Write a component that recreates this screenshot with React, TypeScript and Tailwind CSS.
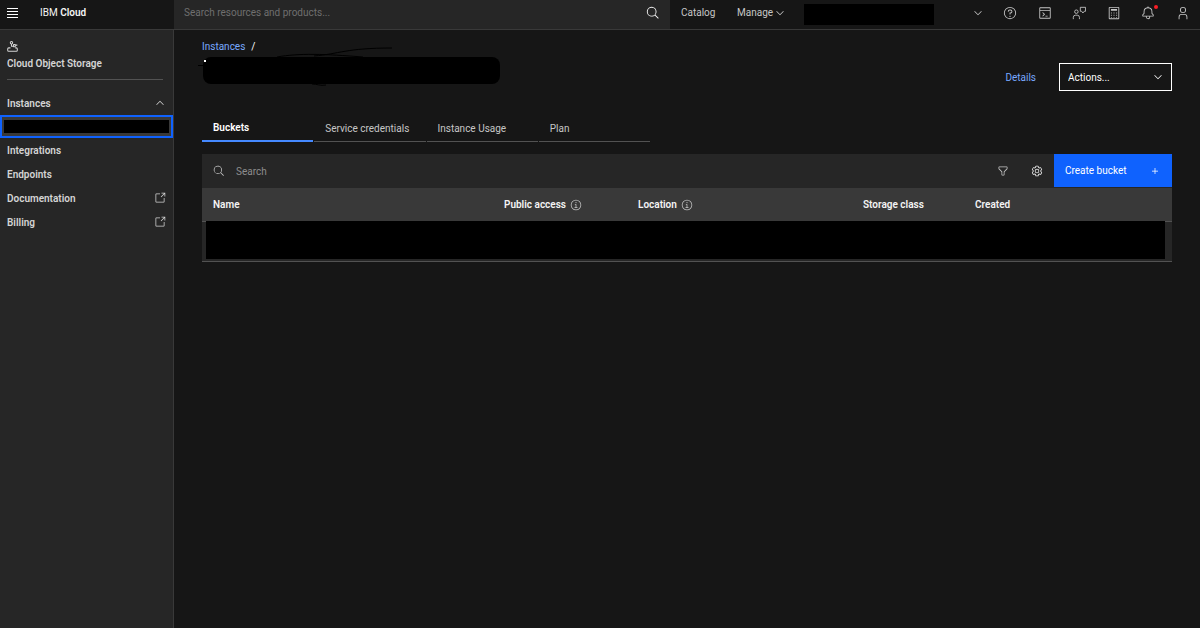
import { useState } from "react";
import type { ReactNode } from "react";
import clsx from "clsx";

interface IconProps {
  className?: string;
  children?: ReactNode;
}

const TABS = ["Buckets", "Service credentials", "Instance Usage", "Plan"];

const NAV_LINKS = [
  { label: "Integrations", external: false },
  { label: "Endpoints", external: false },
  { label: "Documentation", external: true },
  { label: "Billing", external: true },
];

const COLUMNS = [
  { label: "Name", width: "", info: false },
  { label: "Public access", width: "w-[134px]", info: true },
  { label: "Location", width: "w-[225px]", info: true },
  { label: "Storage class", width: "w-[112px]", info: false },
  { label: "Created", width: "w-[208px]", info: false },
];

function Icon({ className, children }: IconProps) {
  return (
    <svg viewBox="0 0 32 32" fill="currentColor" aria-hidden="true" className={clsx("shrink-0", className)}>
      {children}
    </svg>
  );
}

function SearchIcon({ className }: IconProps) {
  return (
    <Icon className={className}>
      <path d="M29,27.5859l-7.5521-7.5521a11.0177,11.0177,0,1,0-1.4141,1.4141L27.5859,29ZM4,13a9,9,0,1,1,9,9A9.01,9.01,0,0,1,4,13Z" />
    </Icon>
  );
}

function ChevronIcon({ className }: IconProps) {
  return (
    <Icon className={className}>
      <path d="M16 22 6 12 7.4 10.6 16 19.2 24.6 10.6 26 12z" />
    </Icon>
  );
}

function LaunchIcon({ className }: IconProps) {
  return (
    <Icon className={className}>
      <path d="M26,28H6a2,2,0,0,1-2-2V6A2,2,0,0,1,6,4H16V6H6V26H26V16h2V26A2,2,0,0,1,26,28Z" />
      <path d="M20 2v2h6.586L18 12.586 19.414 14 28 5.414V12h2V2z" />
    </Icon>
  );
}

function InfoIcon({ className }: IconProps) {
  return (
    <Icon className={className}>
      <path d="M17 22V14H13v2h2v6H12v2h8V22ZM16 8a1.5 1.5 0 1 0 1.5 1.5A1.5 1.5 0 0 0 16 8Z" />
      <path d="M16 30A14 14 0 1 1 30 16 14 14 0 0 1 16 30ZM16 4A12 12 0 1 0 28 16 12 12 0 0 0 16 4Z" />
    </Icon>
  );
}

function FilterIcon({ className }: IconProps) {
  return (
    <Icon className={className}>
      <path d="M18 28H14a2 2 0 0 1-2-2V18.41L4.59 11A2 2 0 0 1 4 9.59V6A2 2 0 0 1 6 4H26a2 2 0 0 1 2 2V9.59A2 2 0 0 1 27.41 11L20 18.41V26A2 2 0 0 1 18 28ZM6 6V9.59l8 8V26h4V17.59l8-8V6Z" />
    </Icon>
  );
}

function SettingsIcon({ className }: IconProps) {
  return (
    <Icon className={className}>
      <path d="M27,16.76c0-.25,0-.5,0-.76s0-.51,0-.77l1.92-1.68A2,2,0,0,0,29.3,11L26.94,7a2,2,0,0,0-1.73-1,2,2,0,0,0-.64.1l-2.43.82a11.35,11.35,0,0,0-1.31-.75l-.51-2.52a2,2,0,0,0-2-1.61H13.64a2,2,0,0,0-2,1.61l-.51,2.52a11.48,11.48,0,0,0-1.32.75L7.43,6.06A2,2,0,0,0,6.79,6,2,2,0,0,0,5.06,7L2.7,11a2,2,0,0,0,.41,2.51L5,15.24c0,.25,0,.5,0,.76s0,.51,0,.77L3.11,18.45A2,2,0,0,0,2.7,21L5.06,25a2,2,0,0,0,1.73,1,2,2,0,0,0,.64-.1l2.43-.82a11.35,11.35,0,0,0,1.31.75l.51,2.52a2,2,0,0,0,2,1.61h4.72a2,2,0,0,0,2-1.61l.51-2.52a11.48,11.48,0,0,0,1.32-.75l2.42.82a2,2,0,0,0,.64.1,2,2,0,0,0,1.73-1L29.3,21a2,2,0,0,0-.41-2.51ZM25.21,24l-3.43-1.16a8.86,8.86,0,0,1-2.71,1.57L18.36,28H13.64l-.71-3.55a9.36,9.36,0,0,1-2.7-1.57L6.79,24,4.43,20l2.72-2.4a8.9,8.9,0,0,1,0-3.13L4.43,12,6.79,8l3.43,1.16a8.86,8.86,0,0,1,2.71-1.57L13.64,4h4.72l.71,3.55a9.36,9.36,0,0,1,2.7,1.57L25.21,8,27.57,12l-2.72,2.4a8.9,8.9,0,0,1,0,3.13L27.57,20Z" />
      <path d="M16,22a6,6,0,1,1,6-6A5.94,5.94,0,0,1,16,22Zm0-10a3.91,3.91,0,0,0-4,4,3.91,3.91,0,0,0,4,4,3.91,3.91,0,0,0,4-4A3.91,3.91,0,0,0,16,12Z" />
    </Icon>
  );
}

function HelpIcon({ className }: IconProps) {
  return (
    <Icon className={className}>
      <path d="M16 2A14 14 0 1 0 30 16 14 14 0 0 0 16 2Zm0 26A12 12 0 1 1 28 16 12 12 0 0 1 16 28Z" />
      <circle cx="16" cy="23.5" r="1.5" />
      <path d="M17 8h-1.5A4.49 4.49 0 0 0 11 12.500V13h2v-.5A2.500 2.500 0 0 1 15.500 10H17a2.500 2.500 0 0 1 0 5H15v4.500h2V17a4.500 4.500 0 0 0 0-9Z" />
    </Icon>
  );
}

function ShellIcon({ className }: IconProps) {
  return (
    <Icon className={className}>
      <path d="M27 3H5A2 2 0 0 0 3 5V27a2 2 0 0 0 2 2H27a2 2 0 0 0 2-2V5A2 2 0 0 0 27 3Zm0 2V9H5V5ZM5 27V11H27V27Z" />
      <path d="M11.200 14 9.800 15.400 13.400 19 9.800 22.600 11.200 24 16.200 19zM17 22h5v2h-5z" />
    </Icon>
  );
}

function FeedbackIcon({ className }: IconProps) {
  return (
    <Icon className={className}>
      <g fill="none" stroke="currentColor" strokeWidth="2">
        <circle cx="10" cy="13" r="4" />
        <path d="M3 30v-4a5 5 0 0 1 5-5h4a5 5 0 0 1 5 5v4" />
        <path d="M21 12h-2V3h12v9h-3l-3 4-3-4z" />
      </g>
    </Icon>
  );
}

function CalculatorIcon({ className }: IconProps) {
  return (
    <Icon className={className}>
      <path d="M26 2H6A2 2 0 0 0 4 4V28a2 2 0 0 0 2 2H26a2 2 0 0 0 2-2V4A2 2 0 0 0 26 2ZM6 28V4H26V28Z" />
      <path d="M9 7h14v4H9zM9 15h2v2H9zM15 15h2v2h-2zM21 15h2v2h-2zM9 20h2v2H9zM15 20h2v2h-2zM21 20h2v2h-2zM9 25h2v2H9zM15 25h2v2h-2zM21 25h2v2h-2z" />
    </Icon>
  );
}

function BellIcon({ className }: IconProps) {
  return (
    <Icon className={className}>
      <path d="M28.7071,19.293,26,16.5859V13a10.0136,10.0136,0,0,0-9-9.9492V1H15V3.0508A10.0136,10.0136,0,0,0,6,13v3.5859L3.2929,19.293A1,1,0,0,0,3,20v3a1,1,0,0,0,1,1h7v.7768a5.152,5.152,0,0,0,4.5,5.1987A5.0057,5.0057,0,0,0,21,25V24h7a1,1,0,0,0,1-1V20A1,1,0,0,0,28.7071,19.293ZM19,25a3,3,0,0,1-6,0V24h6Zm8-3H5V20.4141L7.707,17.707A1,1,0,0,0,8,17V13a8,8,0,0,1,16,0v4a1,1,0,0,0,.293.707L27,20.4141Z" />
    </Icon>
  );
}

function UserIcon({ className }: IconProps) {
  return (
    <Icon className={className}>
      <path d="M16 4a5 5 0 1 1-5 5 5 5 0 0 1 5-5m0-2a7 7 0 1 0 7 7A7 7 0 0 0 16 2ZM26 30H24V25a5 5 0 0 0-5-5H13a5 5 0 0 0-5 5v5H6V25a7 7 0 0 1 7-7h6a7 7 0 0 1 7 7Z" />
    </Icon>
  );
}

function StorageIcon({ className }: IconProps) {
  return (
    <Icon className={className}>
      <g fill="none" stroke="currentColor" strokeWidth="3">
        <circle cx="13" cy="5" r="3.500" />
        <path d="M13 9v6h6" />
        <rect x="19" y="10" width="5" height="7" rx="1" />
        <path d="M24 12h6M10 20H5a3 3 0 0 0-3 3v4a3 3 0 0 0 3 3h22a3 3 0 0 0 3-3v-4a3 3 0 0 0-3-3h-3" />
      </g>
    </Icon>
  );
}

const TOOLS = [
  { label: "Help", icon: HelpIcon },
  { label: "Cloud Shell", icon: ShellIcon },
  { label: "Feedback", icon: FeedbackIcon },
  { label: "Cost estimator", icon: CalculatorIcon },
  { label: "Notifications", icon: BellIcon },
  { label: "Account", icon: UserIcon },
];

function Header() {
  return (
    <header className="flex h-[30px] border-b border-[#393939] text-[#c6c6c6]">
      <div className="flex w-[174px] shrink-0 items-center pb-1 pl-[7px]">
        <button aria-label="Menu" className="flex w-[11px] flex-col gap-[2px] text-white">
          <span className="h-px w-full bg-current" />
          <span className="h-px w-full bg-current" />
          <span className="h-px w-full bg-current" />
          <span className="h-px w-full bg-current" />
        </button>
        <a href="#" className="ml-[22px] text-[#f4f4f4]">
          IBM <span className="font-semibold">Cloud</span>
        </a>
      </div>
      <div className="flex flex-1 items-center bg-[#262626] pr-[10px] pb-1 pl-[10px]">
        <input
          type="search"
          aria-label="Search resources and products"
          placeholder="Search resources and products..."
          className="min-w-0 flex-1 bg-transparent outline-none placeholder:text-[#6f6f6f]"
        />
        <button aria-label="Search" className="text-[#f4f4f4]">
          <SearchIcon className="size-[14px]" />
        </button>
      </div>
      <nav className="flex shrink-0 items-center pb-1 pl-[11px]">
        <a href="#" className="w-14">Catalog</a>
        <button className="flex w-[67px] items-center gap-px">
          Manage <ChevronIcon className="size-3" />
        </button>
        <button aria-label="Switch account" className="flex items-start pt-[3px]">
          <span className="h-[21px] w-[130px] bg-black" />
          <ChevronIcon className="mt-[3px] mr-[9px] ml-[38px] size-3" />
        </button>
        <div className="grid w-[207px] grid-cols-6">
          {TOOLS.map(({ label, icon: ToolIcon }) => (
            <button key={label} aria-label={label} className="relative flex justify-center">
              <ToolIcon className="size-[14px]" />
              {label === "Notifications" && (
                <span className="absolute -top-px right-2 size-1 rounded-full bg-[#fa1e26]" />
              )}
            </button>
          ))}
        </div>
      </nav>
    </header>
  );
}

function Sidebar() {
  return (
    <aside className="w-[174px] shrink-0 border-r border-[#393939] bg-[#262626] font-semibold text-[#d4d4d4]">
      <div className="mr-[10px] ml-[7px] border-b border-[#525252] pt-[11px] pb-2">
        <StorageIcon className="size-[11px]" />
        <div className="mt-1">Cloud Object Storage</div>
      </div>
      <nav className="pt-[11px]">
        <button className="flex h-6 w-full items-center justify-between pr-[7px] pl-[7px]">
          Instances <ChevronIcon className="size-3 rotate-180" />
        </button>
        <a href="#" aria-label="Current instance" className="block h-[23px] border-2 border-[#0f62fe] bg-[#393939] px-[2px] py-[3px]">
          <span className="block h-[13px] bg-black" />
        </a>
        {NAV_LINKS.map(({ label, external }) => (
          <a key={label} href="#" className="flex h-6 items-center justify-between pr-[7px] pl-[7px]">
            {label}
            {external && <LaunchIcon className="size-3" />}
          </a>
        ))}
      </nav>
    </aside>
  );
}

function InstanceName() {
  return (
    <h1 aria-label="Instance name" className="relative mt-[3px] ml-px h-[27px] w-[297px] rounded-lg bg-black">
      {/* pen strokes around the blacked-out name */}
      <svg viewBox="0 0 200 40" fill="none" stroke="#000" aria-hidden="true" className="absolute -top-[10px] -left-[6px] h-10 w-[200px]">
        <path d="M1 18.500h7M80 10c22-4 48-3 86 0M117 9c25-2 32-8 78-8M115 37c5 0 8 2 14 1" />
        <path d="M7 14h2" stroke="#fff" strokeWidth="2" />
      </svg>
    </h1>
  );
}

function BucketTable() {
  return (
    <section className="mt-3">
      <div className="flex h-[34px] bg-[#262626]">
        <label className="flex flex-1 items-center gap-[11px] pl-[11px] text-[#c6c6c6]">
          <SearchIcon className="size-3" />
          <input
            type="search"
            aria-label="Search buckets"
            placeholder="Search"
            className="min-w-0 flex-1 bg-transparent outline-none placeholder:text-[#8d8d8d]"
          />
        </label>
        <button aria-label="Filter" className="flex w-[34px] items-center justify-center text-[#c6c6c6]">
          <FilterIcon className="size-3" />
        </button>
        <button aria-label="Table settings" className="flex w-[34px] items-center justify-center text-[#f4f4f4]">
          <SettingsIcon className="size-3" />
        </button>
        <button className="flex h-[33px] w-[118px] items-center justify-between bg-[#0f62fe] pr-[11px] pl-[11px] text-white">
          Create bucket
          <Icon className="size-3">
            <path d="M17 15V8h-2v7H8v2h7v7h2v-7h7v-2z" />
          </Icon>
        </button>
      </div>
      <table className="w-full table-fixed text-left">
        <thead>
          <tr className="h-[33px] border-b border-[#525252] bg-[#393939]">
            {COLUMNS.map(({ label, width, info }) => (
              <th key={label} className={clsx("pt-px pl-[11px] font-semibold whitespace-nowrap text-[#f4f4f4]", width)}>
                <span className="flex items-center gap-1">
                  {label}
                  {info && <InfoIcon className="size-3 text-[#c6c6c6]" />}
                </span>
              </th>
            ))}
          </tr>
        </thead>
        <tbody>
          <tr className="h-10 border-b border-[#525252] bg-[#262626]">
            <td colSpan={5} className="pr-[7px] pl-1 align-top">
              <div className="relative -mt-px h-[38px] bg-black" />
            </td>
          </tr>
        </tbody>
      </table>
    </section>
  );
}

export default function App() {
  const [activeTab, setActiveTab] = useState("Buckets");

  return (
    <div className="flex min-h-screen flex-col bg-[#161616] font-['Roboto',sans-serif] text-[10px] leading-[15px]">
      <Header />
      <div className="flex flex-1">
        <Sidebar />
        <main className="min-w-0 flex-1 px-7 pt-[9px]">
          <div className="flex items-start justify-between">
            <div>
              <nav aria-label="Breadcrumb" className="flex gap-[6px] text-white">
                <a href="#" className="text-[#78a9ff]">Instances</a>
                <span>/</span>
              </nav>
              <InstanceName />
            </div>
            <div className="mt-6 flex items-center gap-[23px]">
              <a href="#" className="text-[#78a9ff]">Details</a>
              <div className="relative">
                <select
                  aria-label="Actions"
                  className="h-7 w-[113px] appearance-none border border-white bg-transparent pl-2 text-white"
                >
                  <option>Actions...</option>
                </select>
                <ChevronIcon className="pointer-events-none absolute top-2 right-2 size-3 text-white" />
              </div>
            </div>
          </div>

          <div role="tablist" className="mt-6 flex w-[448px] gap-px">
            {TABS.map(tab => (
              <button
                key={tab}
                role="tab"
                aria-selected={activeTab === tab}
                onClick={() => setActiveTab(tab)}
                className={clsx(
                  "h-[27px] flex-1 basis-0 pl-[11px] text-left whitespace-nowrap",
                  activeTab === tab
                    ? "border-b-2 border-[#4589ff] font-semibold text-white"
                    : "border-b border-[#525252] text-[#c6c6c6]"
                )}
              >
                {tab}
              </button>
            ))}
          </div>

          <BucketTable />
        </main>
      </div>
    </div>
  );
}
